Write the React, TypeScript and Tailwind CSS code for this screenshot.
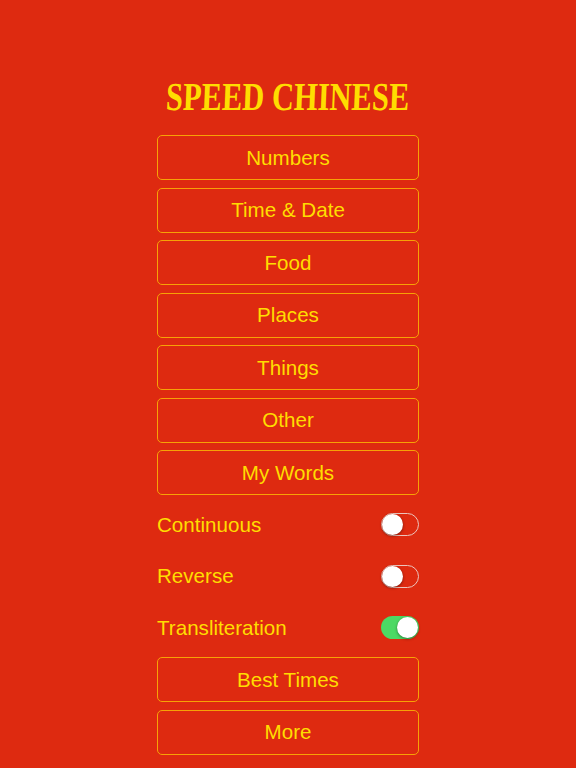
const font = "font-['Liberation_Sans',Arial,sans-serif]";

function MenuButton({ label }: { label: string }) {
  return (
    <button className="h-[45px] w-full rounded-[5px] border border-[#f7a206] pt-px text-[20.6px] leading-none text-[#ffdd00]">
      {label}
    </button>
  );
}

function Toggle({ label, on }: { label: string; on?: boolean }) {
  return (
    <div className="flex h-[44px] items-center justify-between text-[20.6px] text-[#ffdd00]">
      <span className="pt-px">{label}</span>
      <div
        className={
          on
            ? "flex h-[23px] w-[38px] items-center justify-end rounded-full bg-[#4cd964] pr-px"
            : "flex h-[23px] w-[38px] items-center justify-start rounded-full border border-[#ecc4bc]"
        }
      >
        <div className="size-[21px] rounded-full bg-white shadow-[0_1px_3px_rgba(0,0,0,0.45)]" />
      </div>
    </div>
  );
}

export default function App() {
  return (
    <div className={`flex h-[768px] w-[576px] flex-col items-center overflow-hidden bg-[#de2a10] ${font}`}>
      <h1 className="mt-[75px] h-[45px] scale-y-[1.3] -skew-x-3 font-['Liberation_Serif',serif] text-[30.5px] leading-[45px] font-bold whitespace-nowrap text-[#ffdd00]">
        SPEED CHINESE
      </h1>
      <div className="mt-[15px] flex w-[262px] flex-col gap-[7.5px]">
        <MenuButton label="Numbers" />
        <MenuButton label="Time & Date" />
        <MenuButton label="Food" />
        <MenuButton label="Places" />
        <MenuButton label="Things" />
        <MenuButton label="Other" />
        <MenuButton label="My Words" />
        <div className="flex flex-col gap-[7.5px]">
          <Toggle label="Continuous" />
          <Toggle label="Reverse" />
          <Toggle label="Transliteration" on />
        </div>
        <MenuButton label="Best Times" />
        <MenuButton label="More" />
      </div>
    </div>
  );
}
